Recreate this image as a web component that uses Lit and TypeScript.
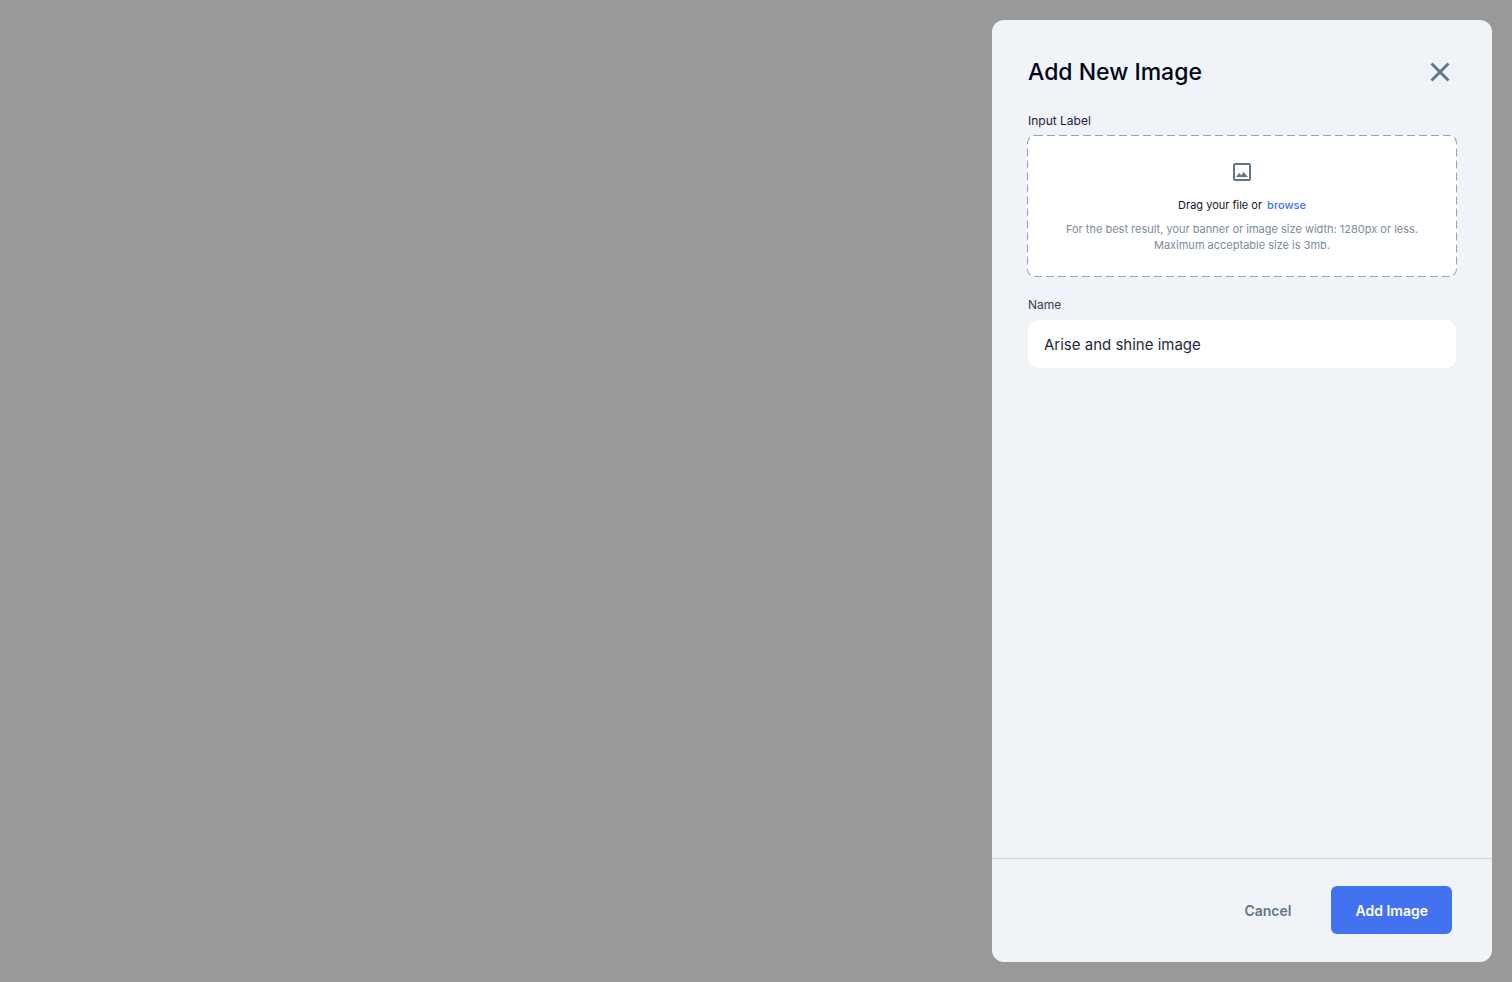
import { LitElement, html, css } from "lit";
import { customElement, query, state } from "lit/decorators.js";

@customElement("file-drop")
export class FileDrop extends LitElement {
  static styles = css`
    :host {
      display: block;
    }
    .label {
      display: block;
      margin-bottom: 7px;
      font-size: 12px;
      line-height: 16px;
      color: #1a2138;
    }
    .zone {
      position: relative;
      display: flex;
      flex-direction: column;
      align-items: center;
      margin: -1px;
      padding: 25px 25px 24px;
      border-radius: 8px;
      background: #fff;
      font-size: 11px;
      line-height: 16px;
      text-align: center;
    }
    .outline {
      position: absolute;
      inset: 0;
      width: 100%;
      height: 100%;
      border-radius: 8px;
      overflow: hidden;
      pointer-events: none;
    }
    .icon {
      width: 24px;
      height: 24px;
      margin-bottom: 13px;
    }
    .prompt {
      display: flex;
      gap: 5px;
      margin: 0 0 8px;
      color: #0f172a;
    }
    .browse {
      padding: 0;
      border: 0;
      background: none;
      font: inherit;
      font-weight: 500;
      color: #4272ef;
      cursor: pointer;
    }
    .hint {
      margin: 0;
      color: #7c8aa0;
    }
  `;

  @query("input") private picker!: HTMLInputElement;

  render() {
    return html`
      <label class="label" for="file">Input Label</label>
      <div class="zone">
        <svg class="outline" aria-hidden="true">
          <rect width="100%" height="100%" rx="8" fill="none" stroke="#94a3b8" stroke-width="2" stroke-dasharray="8 4" />
        </svg>
        <svg class="icon" viewBox="0 0 24 24" fill="#64748b" aria-hidden="true">
          <path d="M19 5v14H5V5h14m0-2H5c-1.100 0-2 .9-2 2v14c0 1.100.9 2 2 2h14c1.100 0 2-.9 2-2V5c0-1.100-.9-2-2-2z" />
          <path d="M6 17l3.200-4 2 2.300 2.500-3.300L18 17z" />
        </svg>
        <input id="file" type="file" accept="image/*" hidden />
        <p class="prompt">
          <span>Drag your file or</span>
          <button class="browse" type="button" @click=${() => this.picker.click()}>browse</button>
        </p>
        <p class="hint">
          For the best result, your banner or image size width: 1280px or less.<br />Maximum acceptable size is 3mb.
        </p>
      </div>
    `;
  }
}

@customElement("app-root")
export class AppRoot extends LitElement {
  static styles = css`
    :host {
      display: flex;
      justify-content: flex-end;
      box-sizing: border-box;
      min-height: 100vh;
      padding: 20px;
      background: #999;
      font-family: Inter, "Liberation Sans", sans-serif;
    }
    .panel {
      display: flex;
      flex-direction: column;
      width: 500px;
      max-width: 100%;
      border-radius: 12px;
      background: #f0f4f9;
    }
    .header {
      display: flex;
      align-items: center;
      justify-content: space-between;
      padding: 36px 36px 25px;
    }
    .title {
      margin: 0;
      font-size: 23px;
      font-weight: 500;
      line-height: 32px;
      color: #020617;
    }
    .close {
      display: flex;
      padding: 0;
      border: 0;
      background: none;
      cursor: pointer;
    }
    .close svg {
      width: 32px;
      height: 32px;
    }
    .body {
      display: flex;
      flex: 1;
      flex-direction: column;
      gap: 21px;
      padding: 0 36px;
    }
    .field {
      display: flex;
      flex-direction: column;
      gap: 7px;
    }
    .label {
      font-size: 12px;
      line-height: 16px;
      color: #334155;
    }
    .input {
      box-sizing: border-box;
      width: 100%;
      height: 48px;
      padding: 0 16px;
      border: 0;
      border-radius: 10px;
      background: #fff;
      font: inherit;
      font-size: 15px;
      color: #1e293b;
    }
    .footer {
      display: flex;
      justify-content: flex-end;
      gap: 16px;
      padding: 27px 40px 28px;
      border-top: 1px solid #cbd5e1;
    }
    .button {
      height: 48px;
      padding: 0 24px;
      border: 0;
      border-radius: 6px;
      background: none;
      font: inherit;
      font-size: 14px;
      font-weight: 600;
      color: #64748b;
      cursor: pointer;
    }
    .primary {
      background: #4272ef;
      color: #fff;
    }
  `;

  @state() private name = "Arise and shine image";

  render() {
    return html`
      <section class="panel" role="dialog" aria-labelledby="title">
        <header class="header">
          <h1 class="title" id="title">Add New Image</h1>
          <button class="close" type="button" aria-label="Close">
            <svg viewBox="0 0 32 32" fill="none" stroke="#64748b" stroke-width="3" aria-hidden="true">
              <path d="M7.500 7.500l17 17M24.500 7.500l-17 17" />
            </svg>
          </button>
        </header>
        <div class="body">
          <file-drop></file-drop>
          <div class="field">
            <label class="label" for="name">Name</label>
            <input
              class="input"
              id="name"
              type="text"
              .value=${this.name}
              @input=${(e: Event) => (this.name = (e.target as HTMLInputElement).value)}
            />
          </div>
        </div>
        <footer class="footer">
          <button class="button" type="button">Cancel</button>
          <button class="button primary" type="button">Add Image</button>
        </footer>
      </section>
    `;
  }
}
